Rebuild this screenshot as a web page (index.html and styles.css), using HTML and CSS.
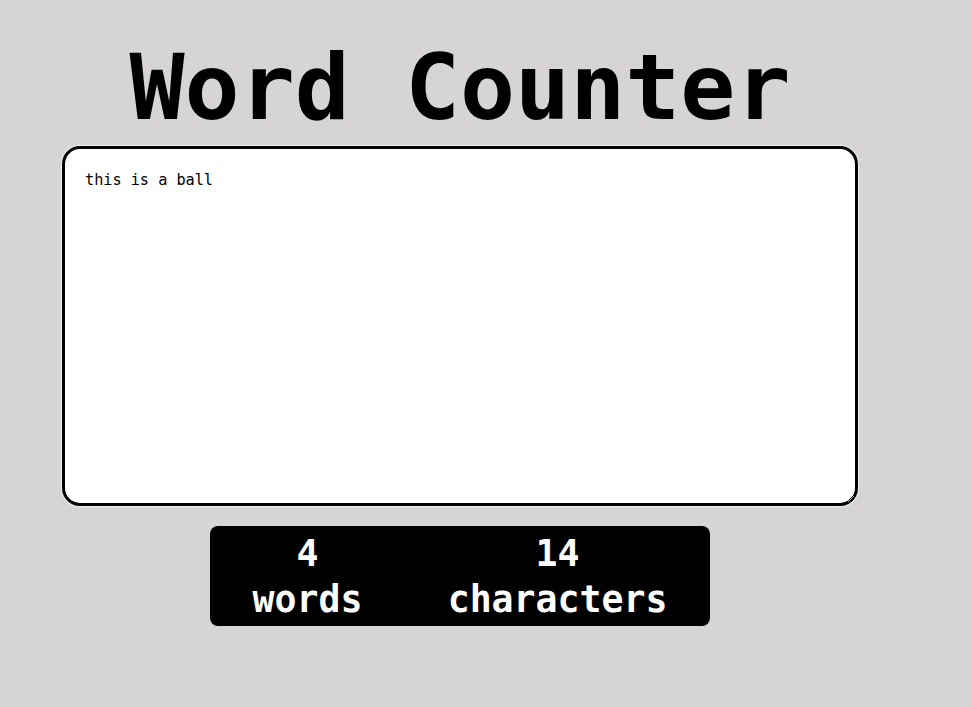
FILE: index.html
```html
<!DOCTYPE html>
<html lang="en">
<head>
<meta charset="utf-8">
<title>Word Counter</title>
<link rel="stylesheet" href="styles.css">
</head>
<body>
<main class="app">
  <h1 class="title">Word Counter</h1>
  <textarea class="input" spellcheck="false">this is a ball</textarea>
  <section class="stats">
    <div class="stat"><span class="num">4</span><span class="label">words</span></div>
    <div class="stat"><span class="num">14</span><span class="label">characters</span></div>
  </section>
</main>
</body>
</html>
```
FILE: styles.css
```css
html, body {
  margin: 0;
  padding: 0;
  background: #d6d4d5;
}
body {
  font-family: "DejaVu Sans Mono", monospace;
}
.app {
  width: 796px;
  margin-left: 62px;
  padding-top: 35px;
  display: flex;
  flex-direction: column;
  align-items: center;
}
.title {
  margin: 0 0 5px 0;
  font-size: 91.5px;
  line-height: 106px;
  font-weight: bold;
  color: #000;
}
.input {
  box-sizing: border-box;
  width: 796px;
  height: 360px;
  border: 3px solid #000;
  border-radius: 18px;
  padding: 22px 20px 20px;
  font-family: "DejaVu Sans Mono", monospace;
  font-size: 15.2px;
  line-height: 18px;
  color: #000;
  background: #fff;
  outline: none;
  box-shadow: 0 0 1px 1px rgba(255, 255, 255, 0.7);
  resize: both;
}
.stats {
  margin-top: 20px;
  width: 500px;
  height: 100px;
  box-sizing: border-box;
  padding-top: 2px;
  background: #000;
  border-radius: 8px;
  display: flex;
  justify-content: space-around;
  align-items: center;
}
.stat {
  display: flex;
  flex-direction: column;
  align-items: center;
  color: #fff;
  font-size: 36.5px;
  font-weight: bold;
  line-height: 46px;
}
```
